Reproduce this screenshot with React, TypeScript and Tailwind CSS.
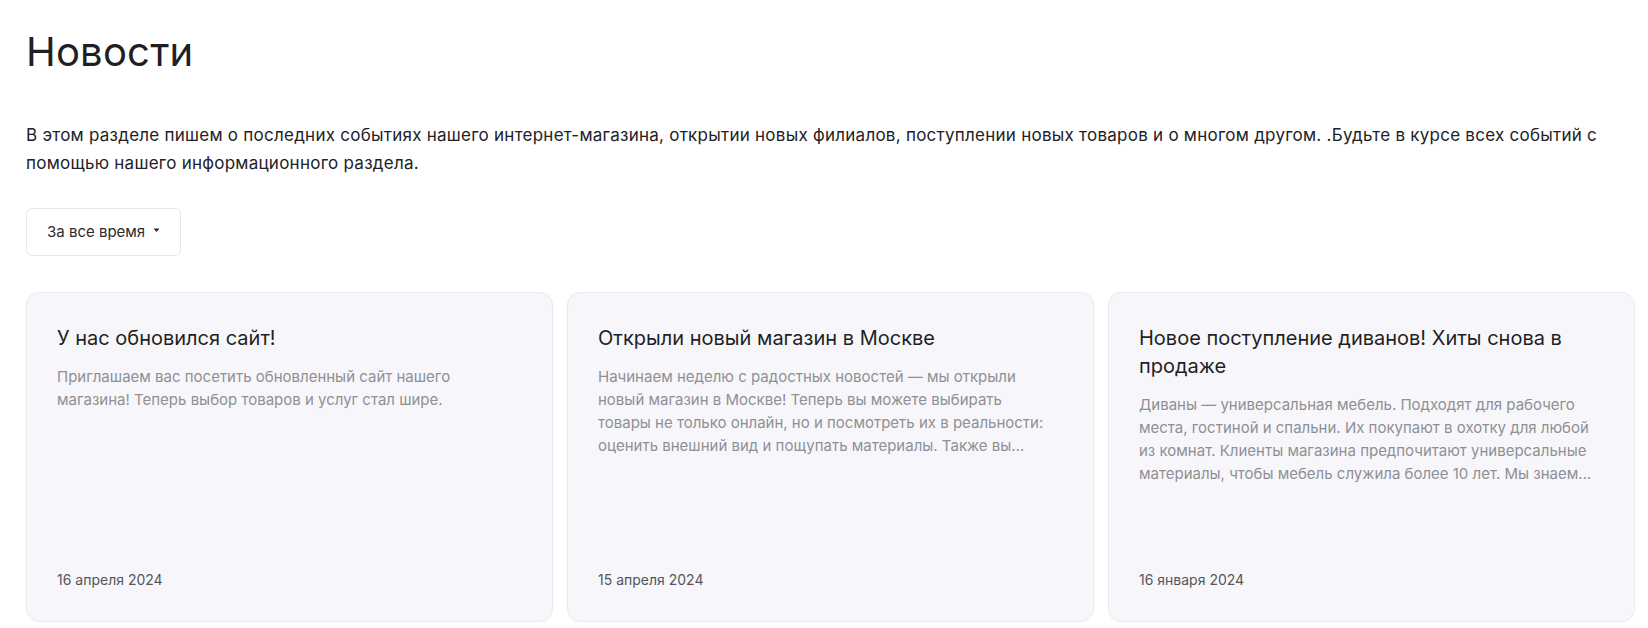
const news = [
    {
        id: 1,
        title: 'У нас обновился сайт!',
        text: 'Приглашаем вас посетить обновленный сайт нашего магазина! Теперь выбор товаров и услуг стал шире.',
        date: '16 апреля 2024',
    },
    {
        id: 2,
        title: 'Открыли новый магазин в Москве',
        text: 'Начинаем неделю с радостных новостей — мы открыли новый магазин в Москве! Теперь вы можете выбирать товары не только онлайн, но и посмотреть их в реальности: оценить внешний вид и пощупать материалы. Также вы можете получить консультацию наших специалистов и оформить заказ прямо в магазине.',
        date: '15 апреля 2024',
    },
    {
        id: 3,
        title: 'Новое поступление диванов! Хиты снова в продаже',
        text: 'Диваны — универсальная мебель. Подходят для рабочего места, гостиной и спальни. Их покупают в охотку для любой из комнат. Клиенты магазина предпочитают универсальные материалы, чтобы мебель служила более 10 лет. Мы знаем толк в удобной мебели, поэтому обновили ассортимент.',
        date: '16 января 2024',
    },
]

export default function App() {
    return (
        <div className="min-h-screen bg-white text-[#1f1f24] font-['Inter',sans-serif]">
            <div className="pl-[26px] pr-[13px] pt-[26px]">
                <h1 className="text-[40px] leading-[52px] font-normal tracking-[0.2px]">Новости</h1>

                <p className="mt-[43px] text-[17px] leading-[28px] text-[#222226] tracking-[0.25px]">
                    В этом разделе пишем о последних событиях нашего интернет-магазина, открытии новых филиалов, поступлении новых товаров и о многом другом. .Будьте в курсе всех событий с помощью нашего информационного раздела.
                </p>

                <button className="mt-[31px] h-[48px] px-[20px] flex items-center gap-[8px] border border-[#e6e6ec] rounded-[6px] bg-white text-[15px] text-[#2a2a2e]">
                    За все время
                    <svg width="7" height="5" viewBox="0 0 7 5" className="mb-[4px]">
                        <path d="M0.5 0.5h6L3.5 4z" fill="#2a2a2e" />
                    </svg>
                </button>

                <div className="mt-[36px] grid grid-cols-3 gap-[14px]">
                    {news.map((item) => (
                        <div
                            key={item.id}
                            className="h-[330px] flex flex-col rounded-[13px] border border-[#e9e9ef] bg-[#f7f7fb] pl-[30px] pr-[36px] pt-[31px] pb-[31px]"
                        >
                            <h3 className="text-[20px] leading-[28px] text-[#1f1f24]">{item.title}</h3>
                            <p className="mt-[13px] text-[15px] leading-[23px] text-[#8f8f94] line-clamp-4">{item.text}</p>
                            <span className="mt-auto text-[14px] leading-[20px] text-[#55555a]">{item.date}</span>
                        </div>
                    ))}
                </div>
            </div>
        </div>
    )
}
